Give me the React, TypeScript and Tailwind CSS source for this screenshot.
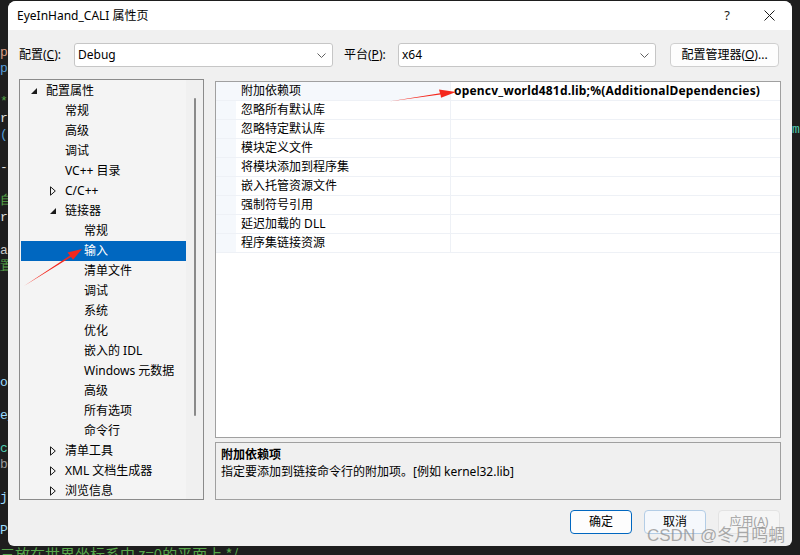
import { ReactNode } from 'react';

const FONT = "font-['Noto_Sans','Noto_Sans_CJK_SC',sans-serif]";

type TreeItem = { label: string; level: 0 | 1 | 2; expander?: 'open' | 'closed'; selected?: boolean };

const tree: TreeItem[] = [
  { label: '配置属性', level: 0, expander: 'open' },
  { label: '常规', level: 1 },
  { label: '高级', level: 1 },
  { label: '调试', level: 1 },
  { label: 'VC++ 目录', level: 1 },
  { label: 'C/C++', level: 1, expander: 'closed' },
  { label: '链接器', level: 1, expander: 'open' },
  { label: '常规', level: 2 },
  { label: '输入', level: 2, selected: true },
  { label: '清单文件', level: 2 },
  { label: '调试', level: 2 },
  { label: '系统', level: 2 },
  { label: '优化', level: 2 },
  { label: '嵌入的 IDL', level: 2 },
  { label: 'Windows 元数据', level: 2 },
  { label: '高级', level: 2 },
  { label: '所有选项', level: 2 },
  { label: '命令行', level: 2 },
  { label: '清单工具', level: 1, expander: 'closed' },
  { label: 'XML 文档生成器', level: 1, expander: 'closed' },
  { label: '浏览信息', level: 1, expander: 'closed' },
];

const indent = ['pl-[10px]', 'pl-[29px]', 'pl-[48px]'];

const props = [
  '附加依赖项',
  '忽略所有默认库',
  '忽略特定默认库',
  '模块定义文件',
  '将模块添加到程序集',
  '嵌入托管资源文件',
  '强制符号引用',
  '延迟加载的 DLL',
  '程序集链接资源',
];

const codeLines: [string, string][] = [
  ['', ''],
  ['pr', 'text-[#d69d85]'],
  ['pr', 'text-[#569cd6]'],
  ['', ''],
  ['*/', 'text-[#57a64a]'],
  ['r', 'text-[#dcdcdc]'],
  ['(', 'text-[#569cd6]'],
  ['', ''],
  ['- I', 'text-[#dcdcdc]'],
  ['', ''],
  ['自', 'text-[#57a64a]'],
  ['r', 'text-[#dcdcdc]'],
  ['', ''],
  ['a', 'text-[#c8c8c8]'],
  ['置', 'text-[#57a64a]'],
  ['', ''],
  ['', ''],
  ['', ''],
  ['', ''],
  ['', ''],
  ['', ''],
  ['ol', 'text-[#9cdcfe]'],
  ['', ''],
  ['e_', 'text-[#9cdcfe]'],
  ['', ''],
  ['ct', 'text-[#4ec9b0]'],
  ['be', 'text-[#9a9a9a]'],
  ['', ''],
  ['j', 'text-[#9cdcfe]'],
  ['', ''],
  ['Pc', 'text-[#9cdcfe]'],
];

function Chevron() {
  return (
    <svg width="9" height="5" viewBox="0 0 9 5" className="text-[#606060]">
      <path d="M0.5 0.5 L4.5 4.5 L8.5 0.5" fill="none" stroke="currentColor" strokeWidth="1" />
    </svg>
  );
}

function Select({ value, width }: { value: string; width: string }) {
  return (
    <div className={`${width} h-[24px] bg-white border border-[#c6c6c6] rounded-[3px] flex items-center justify-between pl-[3px] pr-[6px] text-[12px] text-black`}>
      <span>{value}</span>
      <Chevron />
    </div>
  );
}

function Expander({ kind, selected }: { kind?: 'open' | 'closed'; selected?: boolean }) {
  const color = selected ? '#ffffff' : '#1a1a1a';
  return (
    <span className="w-[15px] h-5 flex items-center">
      {kind === 'open' && (
        <svg width="6" height="6" viewBox="0 0 6 6">
          <path d="M6 0 L6 6 L0 6 Z" fill={color} />
        </svg>
      )}
      {kind === 'closed' && (
        <svg width="6" height="10" viewBox="0 0 6 10">
          <path d="M0.5 0.8 L5.3 5 L0.5 9.2 Z" fill="none" stroke={color} strokeWidth="1" />
        </svg>
      )}
    </span>
  );
}

function Button({ children, variant }: { children: ReactNode; variant: 'default' | 'hover' | 'disabled' }) {
  const styles = {
    default: 'border-[#0067c0] border-[1.5px] text-black bg-[#fdfdfd]',
    hover: 'border-[#b3cde6] border text-black bg-[#f5f8fc]',
    disabled: 'border-[#e3e3e3] border text-[#a2a2a2] bg-[#f5f5f5]',
  }[variant];
  return (
    <div className={`w-[62px] h-[24px] rounded-[4px] flex items-center justify-center text-[12px] ${styles}`}>
      {children}
    </div>
  );
}

export default function App() {
  return (
    <div className={`w-[800px] h-[555px] bg-[#1e1e1e] relative overflow-hidden flex flex-col ${FONT}`}>
      <div className="flex h-[546px]">
        {/* code editor peeking on the left */}
        <div className="w-[8px] overflow-hidden pt-[28px] font-['Liberation_Mono',monospace] text-[13px] leading-[16.5px] whitespace-nowrap">
          {codeLines.map(([t, c], i) => (
            <div key={i} className={`h-[16.5px] ${c}`}>{t}</div>
          ))}
        </div>

        {/* dialog */}
        <div className="w-[784px] mt-[1px] bg-[#f0f0f0] rounded-t-[8px] rounded-b-[6px] overflow-hidden flex flex-col">
          <div className="h-[29px] bg-white flex items-center justify-between pl-[9px] pr-[17px] shrink-0">
            <span className="text-[12px] text-black">EyeInHand_CALI 属性页</span>
            <div className="flex items-center gap-[34px]">
              <span className="text-[13px] text-[#1a1a1a]">?</span>
              <svg width="11" height="11" viewBox="0 0 11 11">
                <path d="M0.5 0.5 L10.5 10.5 M10.5 0.5 L0.5 10.5" stroke="#1a1a1a" strokeWidth="1" />
              </svg>
            </div>
          </div>

          <div className="flex-1 flex flex-col px-[11px] pt-[13px] pb-[12px]">
            {/* configuration row */}
            <div className="h-[24px] flex items-center text-[12px] text-black">
              <span className="w-[55px]">配置(<u>C</u>):</span>
              <Select value="Debug" width="w-[259px]" />
              <span className="ml-[11px] w-[54px]">平台(<u>P</u>):</span>
              <Select value="x64" width="w-[258px]" />
              <div className="ml-[14px] w-[109px] h-[24px] bg-[#fdfdfd] border border-[#cfcfcf] rounded-[4px] flex items-center justify-center">
                配置管理器(<u>O</u>)...
              </div>
            </div>

            {/* main area */}
            <div className="mt-[12px] h-[421px] flex gap-[11px]">
              <div className="w-[185px] border border-[#8b8b8b] bg-[#f4f4f4] flex">
                <div className="flex-1 pl-[1px] pt-[1px] text-[12px] text-black">
                  {tree.map((item, i) => (
                    <div
                      key={i}
                      className={`h-5 flex items-center ${indent[item.level]} ${item.selected ? 'bg-[#0067c0] text-white' : ''}`}
                    >
                      <Expander kind={item.expander} selected={item.selected} />
                      <span>{item.label}</span>
                    </div>
                  ))}
                </div>
                <div className="w-[17px] bg-[#f0f0f0] flex justify-center pt-[18px]">
                  <div className="w-[2px] h-[318px] bg-[#8a8a8a] rounded-full" />
                </div>
              </div>

              <div className="flex-1 flex flex-col gap-[4px] pt-[2px]">
                <div className="h-[357px] border border-[#a0a0a0] bg-white">
                  {props.map((p, i) => (
                    <div key={i} className="h-[19px] flex border-b border-[#eef1f6] text-[12px] text-black">
                      <div className="w-[20px] bg-[#f5f8fc]" />
                      <div className={`w-[215px] flex items-center pl-[5px] border-r border-[#eef1f6] ${i === 0 ? 'bg-[#f5f8fc]' : ''}`}>
                        {p}
                      </div>
                      <div className="flex-1 flex items-center pl-[3px] font-bold tracking-[0.2px] whitespace-nowrap overflow-hidden">
                        {i === 0 ? 'opencv_world481d.lib;%(AdditionalDependencies)' : ''}
                      </div>
                    </div>
                  ))}
                </div>
                <div className="flex-1 border border-[#a0a0a0] bg-[#f0f0f0] px-[5px] pt-[3px] text-[12px] text-black leading-[17px]">
                  <div className="font-bold">附加依赖项</div>
                  <div>指定要添加到链接命令行的附加项。[例如 kernel32.lib]</div>
                </div>
              </div>
            </div>

            {/* buttons */}
            <div className="mt-[10px] flex justify-end gap-[12px] pr-[1px]">
              <Button variant="default">确定</Button>
              <Button variant="hover">取消</Button>
              <Button variant="disabled">应用(<u>A</u>)</Button>
            </div>
          </div>
        </div>

        {/* code editor on the right */}
        <div className="w-[8px] overflow-hidden pt-[120px] font-['Liberation_Mono',monospace] text-[13px] text-[#4ec9b0] whitespace-nowrap">
          ml
        </div>
      </div>

      {/* bottom code line */}
      <div className="h-[9px] overflow-hidden text-[15px] leading-[16px] text-[#57a64a] whitespace-nowrap font-['Noto_Sans_CJK_SC',sans-serif]">
        三放在世界坐标系中 z=0的平面上 */
      </div>

      {/* watermark */}
      <div className="absolute left-[647px] top-[526px] text-[17px] leading-[20px] text-[#8f8f8f]/75 whitespace-nowrap font-['Liberation_Sans','Noto_Sans_CJK_SC',sans-serif]">
        CSDN @冬月鸣蜩
      </div>

      {/* red annotation arrows */}
      <svg className="absolute inset-0 pointer-events-none" width="800" height="555" viewBox="0 0 800 555">
        <path d="M389 101.5 L440 93.2 L439 89.5 L456 92 L441 97.8 L440.5 94.6 Z" fill="#f4281e" />
        <path d="M24 286 L70 255.5 L67.5 252.5 L82 249 L73 259.8 L71 257 Z" fill="#f4281e" />
      </svg>
    </div>
  );
}
